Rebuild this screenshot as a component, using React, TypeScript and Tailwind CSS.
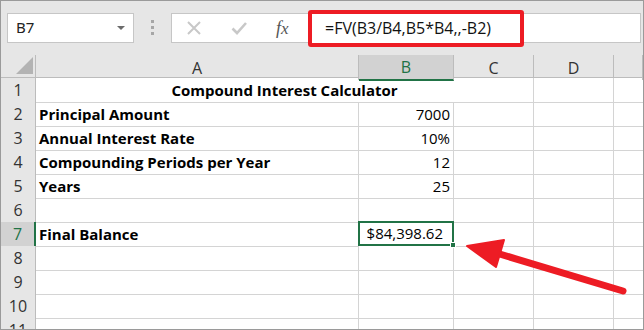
import React from "react";

const COLS = ["A", "B", "C", "D", ""];
const cellFont = { fontFamily: "'Open Sans', Lato, sans-serif" };

const rows: { a?: string; b?: string }[] = [
  {},
  { a: "Principal Amount", b: "7000" },
  { a: "Annual Interest Rate", b: "10%" },
  { a: "Compounding Periods per Year", b: "12" },
  { a: "Years", b: "25" },
  {},
  { a: "Final Balance", b: "$84,398.62" },
  {},
  {},
  {},
  {},
];

const gridCols = "grid grid-cols-[35px_323px_95px_80px_80px_1fr]";

export default function App() {
  return (
    <div className="relative w-[644px] h-[330px] overflow-hidden bg-[#e6e6e6] border border-[#9a9a9a] font-['Open_Sans',sans-serif]">
      {/* formula bar */}
      <div className="flex items-center h-[54px] pl-[6px] pr-[2px] pb-[12px] pt-[11px]">
        <div className="flex items-center justify-between w-[127px] h-[30px] bg-white border border-[#c6c6c6] pl-[8px] pr-[8px]">
          <span className="text-[15px] text-[#222] font-['Noto_Sans',sans-serif]">B7</span>
          <span className="w-0 h-0 border-l-[4px] border-r-[4px] border-t-[4px] border-l-transparent border-r-transparent border-t-[#6b6b6b]" />
        </div>
        <div className="flex flex-col gap-[3px] w-[37px] items-center">
          <span className="w-[3px] h-[3px] bg-[#a6a6a6]" />
          <span className="w-[3px] h-[3px] bg-[#a6a6a6]" />
          <span className="w-[3px] h-[3px] bg-[#a6a6a6]" />
        </div>
        <div className="relative flex items-center flex-1 h-[30px] bg-white border border-[#c6c6c6]">
          <svg width="16" height="16" viewBox="0 0 16 16" className="ml-[14px]">
            <path d="M2 2 L14 14 M14 2 L2 14" stroke="#c8c8c8" strokeWidth="2" fill="none" />
          </svg>
          <svg width="16" height="16" viewBox="0 0 16 16" className="ml-[29px]">
            <path d="M1.5 8.5 L6 13 L15 3" stroke="#c8c8c8" strokeWidth="2.6" fill="none" />
          </svg>
          <span className="ml-[29px] text-[17px] italic text-[#555] font-['Liberation_Serif',serif] leading-none">
            <span className="text-[18px]">f</span>x
          </span>
          <div className="absolute left-[136px] top-[-4px] w-[216px] h-[37px] border-[4px] border-[#ed1c24] rounded-[3px] bg-white flex items-center pl-[13px]">
            <span className="text-[16px] text-[#111]" style={cellFont}>=FV(B3/B4,B5*B4,,-B2)</span>
          </div>
        </div>
      </div>

      {/* column headers */}
      <div className={`${gridCols} h-[23px] border-b border-[#bcbcbc]`}>
        <div className="relative border-r border-[#bcbcbc]">
          <svg width="18" height="18" className="absolute left-[15px] top-[2px]">
            <polygon points="17,0 17,17 0,17" fill="#b3b3b3" />
          </svg>
        </div>
        {COLS.map((c, i) => (
          <div
            key={i}
            className={
              c === "B"
                ? "bg-[#d2d2d2] border-r border-[#bcbcbc] border-b-2 border-b-[#217346] -mb-px flex items-center justify-center text-[16px] text-[#217346]"
                : "border-r border-[#bcbcbc] flex items-center justify-center text-[16px] text-[#333]"
            }
          >
            {c}
          </div>
        ))}
      </div>

      {/* rows */}
      <div className="bg-white">
        {rows.map((r, i) => {
          const n = i + 1;
          const sel = n === 7;
          return (
            <div key={n} className={`${gridCols} h-[24px]`}>
              <div
                className={
                  sel
                    ? "bg-[#d2d2d2] border-b border-[#bcbcbc] border-r-2 border-r-[#217346] flex items-center justify-center text-[16px] text-[#217346]"
                    : "bg-[#e6e6e6] border-b border-r border-[#bcbcbc] flex items-center justify-center text-[16px] text-[#333]"
                }
              >
                {n}
              </div>
              {n === 1 ? (
                <div className="col-span-3 border-b border-r border-[#d4d4d4] flex items-center justify-center font-bold text-[15px] text-black" style={cellFont}>
                  Compound Interest Calculator
                </div>
              ) : (
                <>
                  <div className="border-b border-r border-[#d4d4d4] flex items-center pl-[3px] font-bold text-[15px] text-black" style={cellFont}>
                    {r.a}
                  </div>
                  <div
                    className={
                      sel
                        ? "relative -mt-px -ml-px h-[25px] border-2 border-[#217346] flex items-center justify-end pr-[9px] text-[15px] text-black"
                        : "border-b border-r border-[#d4d4d4] flex items-center justify-end pr-[3px] text-[15px] text-black"
                    }
                    style={cellFont}
                  >
                    {r.b}
                    {sel && <span className="absolute right-[-4px] bottom-[-4px] w-[6px] h-[6px] bg-[#217346] border border-white" />}
                  </div>
                  <div className="border-b border-r border-[#d4d4d4]" />
                </>
              )}
              <div className="border-b border-r border-[#d4d4d4]" />
              <div className="border-b border-[#d4d4d4]" />
            </div>
          );
        })}
      </div>

      {/* arrow annotation */}
      <svg className="absolute left-0 top-0 pointer-events-none" width="644" height="330">
        <line x1="622" y1="290" x2="492" y2="251" stroke="#ed1c24" strokeWidth="7" strokeLinecap="round" />
        <polygon points="466,245 503,239 495,266" fill="#ed1c24" stroke="#ed1c24" strokeWidth="2" strokeLinejoin="round" />
      </svg>
    </div>
  );
}
